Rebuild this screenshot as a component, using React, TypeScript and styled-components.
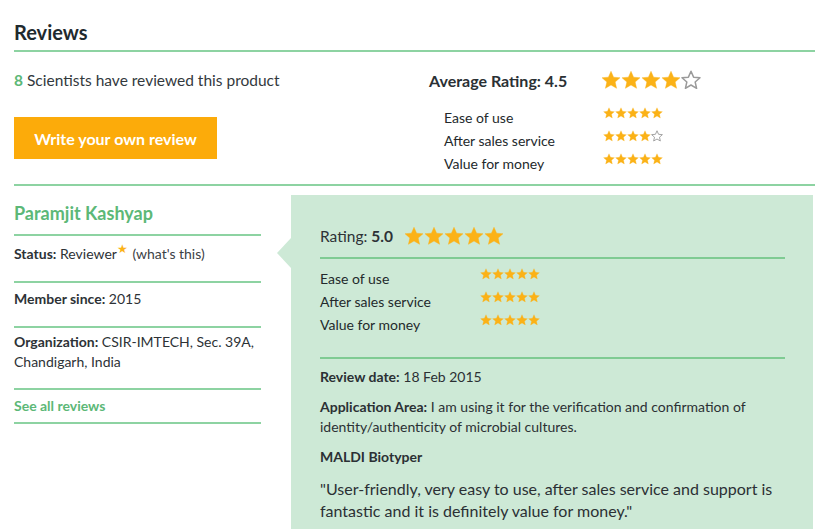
import React from 'react';
import styled, { createGlobalStyle } from 'styled-components';

const GlobalStyle = createGlobalStyle`
  body {
    margin: 0;
    background: #ffffff;
    font-family: Lato, "Open Sans", sans-serif;
    color: #2d3236;
  }
`;

const green = '#5cb877';
const lineGreen = '#8dd3a2';
const panelBg = '#cde9d6';
const starColor = '#fbb217';

const Page = styled.div`
  width: 801px;
  padding-left: 14px;
`;

const Title = styled.h1`
  margin: 0;
  padding: 20px 0 5px;
  font-size: 20px;
  line-height: 25px;
  font-weight: 700;
  color: #1f2a2e;
  border-bottom: 2px solid ${lineGreen};
`;

const Summary = styled.section`
  display: flex;
  border-bottom: 2px solid ${lineGreen};
`;

const SummaryLeft = styled.div`
  width: 415px;
  padding: 18px 0 25px;
`;

const SummaryRight = styled.div`
  padding-top: 18px;
`;

const Count = styled.p`
  margin: 0;
  font-size: 15.5px;
  line-height: 20px;
  color: #33393d;

  b {
    color: ${green};
  }
`;

const WriteButton = styled.button`
  display: block;
  margin-top: 27px;
  width: 203px;
  height: 42px;
  border: none;
  background: #fcab0a;
  color: #ffffff;
  font-family: Lato, sans-serif;
  font-size: 16px;
  font-weight: 700;
  cursor: pointer;
`;

const AverageRow = styled.div`
  display: flex;
  align-items: center;
  height: 20px;
`;

const AverageLabel = styled.span`
  width: 172px;
  font-size: 16px;
  font-weight: 700;
  color: #2a3034;
`;

const SubGrid = styled.div<{ $labelWidth: number; $top: number; $left: number }>`
  display: grid;
  grid-template-columns: ${(p) => p.$labelWidth}px auto;
  margin-top: ${(p) => p.$top}px;
  margin-left: ${(p) => p.$left}px;
`;

const SubLabel = styled.span`
  font-size: 14px;
  line-height: 23px;
  color: #23292c;
`;

const SubStars = styled.span`
  display: flex;
  align-items: flex-start;
  padding-top: 1px;
`;

const StarRow = styled.span<{ $gap: number }>`
  display: inline-flex;
  gap: ${(p) => p.$gap}px;
  vertical-align: middle;
`;

const Body = styled.section`
  display: flex;
  gap: 30px;
  margin-top: 9px;
`;

const Reviewer = styled.aside`
  width: 247px;
  flex: none;
`;

const InfoRow = styled.div<{ $pt: number; $pb: number }>`
  padding: ${(p) => p.$pt}px 0 ${(p) => p.$pb}px;
  border-bottom: 2px solid ${lineGreen};
  font-size: 14px;
  line-height: 20px;
`;

const Name = styled.span`
  color: ${green};
  font-size: 18px;
  font-weight: 700;
`;

const GreenLink = styled.a`
  color: ${green};
  font-weight: 700;
  text-decoration: none;
`;

const Muted = styled.span`
  color: #3b4145;
  margin-left: 1px;
`;

const Badge = styled.sup`
  color: ${starColor};
  font-size: 12px;
  line-height: 0;
`;

const Panel = styled.article`
  position: relative;
  flex: 1;
  margin-right: 2px;
  background: ${panelBg};
  padding: 29px 28px 24px 29px;

  &::before {
    content: '';
    position: absolute;
    left: -14px;
    top: 43px;
    border-right: 14px solid ${panelBg};
    border-top: 15px solid transparent;
    border-bottom: 15px solid transparent;
  }
`;

const RatingHead = styled.div`
  display: flex;
  align-items: center;
  gap: 11px;
  height: 24px;
  padding-bottom: 9px;
  border-bottom: 2px solid #7fcb93;
  font-size: 15.5px;
`;

const PanelRatings = styled.div`
  padding: 8px 0 21px;
  border-bottom: 2px solid #7fcb93;
`;

const Para = styled.p<{ $size?: number; $lh?: number; $mt: number }>`
  margin: ${(p) => p.$mt}px 0 0;
  font-size: ${(p) => p.$size ?? 14}px;
  line-height: ${(p) => p.$lh ?? 20}px;
  color: #2b3034;
`;

const StarIcon = ({ size, filled }: { size: number; filled: boolean }) => (
  <svg width={size} height={size} viewBox="0 0 24 24">
    <path
      d="M12 1.5l3.1 7.1 7.7.7-5.8 5.1 1.7 7.6L12 18l-6.7 4 1.7-7.6-5.8-5.1 7.7-.7z"
      fill={filled ? starColor : 'none'}
      stroke={filled ? starColor : '#9a9a9a'}
      strokeWidth={filled ? 0.5 : 1.8}
      strokeLinejoin="round"
    />
  </svg>
);

const Stars = ({ value, size, gap }: { value: number; size: number; gap: number }) => (
  <StarRow $gap={gap}>
    {[0, 1, 2, 3, 4].map((i) => (
      <StarIcon key={i} size={size} filled={i < value} />
    ))}
  </StarRow>
);

const subRatings = [
  { label: 'Ease of use', value: 5 },
  { label: 'After sales service', value: 4 },
  { label: 'Value for money', value: 5 },
];

const reviewRatings = [
  { label: 'Ease of use', value: 5 },
  { label: 'After sales service', value: 5 },
  { label: 'Value for money', value: 5 },
];

const App = () => {
  return (
    <Page>
      <GlobalStyle />
      <Title>Reviews</Title>

      <Summary>
        <SummaryLeft>
          <Count>
            <b>8</b> Scientists have reviewed this product
          </Count>
          <WriteButton>Write your own review</WriteButton>
        </SummaryLeft>
        <SummaryRight>
          <AverageRow>
            <AverageLabel>Average Rating: 4.5</AverageLabel>
            <Stars value={4} size={20} gap={0} />
          </AverageRow>
          <SubGrid $labelWidth={159} $top={16} $left={15}>
            {subRatings.map((r) => (
              <React.Fragment key={r.label}>
                <SubLabel>{r.label}</SubLabel>
                <SubStars>
                  <Stars value={r.value} size={12} gap={0} />
                </SubStars>
              </React.Fragment>
            ))}
          </SubGrid>
        </SummaryRight>
      </Summary>

      <Body>
        <Reviewer>
          <InfoRow $pt={8} $pb={9}>
            <Name>Paramjit Kashyap</Name>
          </InfoRow>
          <InfoRow $pt={8} $pb={17}>
            <b>Status:</b> Reviewer<Badge>★</Badge> <Muted>(what's this)</Muted>
          </InfoRow>
          <InfoRow $pt={6} $pb={17}>
            <b>Member since:</b> 2015
          </InfoRow>
          <InfoRow $pt={4} $pb={16}>
            <b>Organization:</b> CSIR-IMTECH, Sec. 39A, Chandigarh, India
          </InfoRow>
          <InfoRow $pt={6} $pb={6}>
            <GreenLink href="#">See all reviews</GreenLink>
          </InfoRow>
        </Reviewer>

        <Panel>
          <RatingHead>
            <span>
              Rating: <b>5.0</b>
            </span>
            <Stars value={5} size={20} gap={0} />
          </RatingHead>
          <PanelRatings>
            <SubGrid $labelWidth={160} $top={0} $left={0}>
              {reviewRatings.map((r) => (
                <React.Fragment key={r.label}>
                  <SubLabel>{r.label}</SubLabel>
                  <SubStars>
                    <Stars value={r.value} size={12} gap={0} />
                  </SubStars>
                </React.Fragment>
              ))}
            </SubGrid>
          </PanelRatings>
          <Para $mt={8}>
            <b>Review date:</b> 18 Feb 2015
          </Para>
          <Para $mt={10}>
            <b>Application Area:</b> I am using it for the verification and confirmation of
            identity/authenticity of microbial cultures.
          </Para>
          <Para $mt={10}>
            <b>MALDI Biotyper</b>
          </Para>
          <Para $mt={11} $size={16} $lh={22}>
            "User-friendly, very easy to use, after sales service and support is fantastic and it
            is definitely value for money."
          </Para>
        </Panel>
      </Body>
    </Page>
  );
};

export default App;
